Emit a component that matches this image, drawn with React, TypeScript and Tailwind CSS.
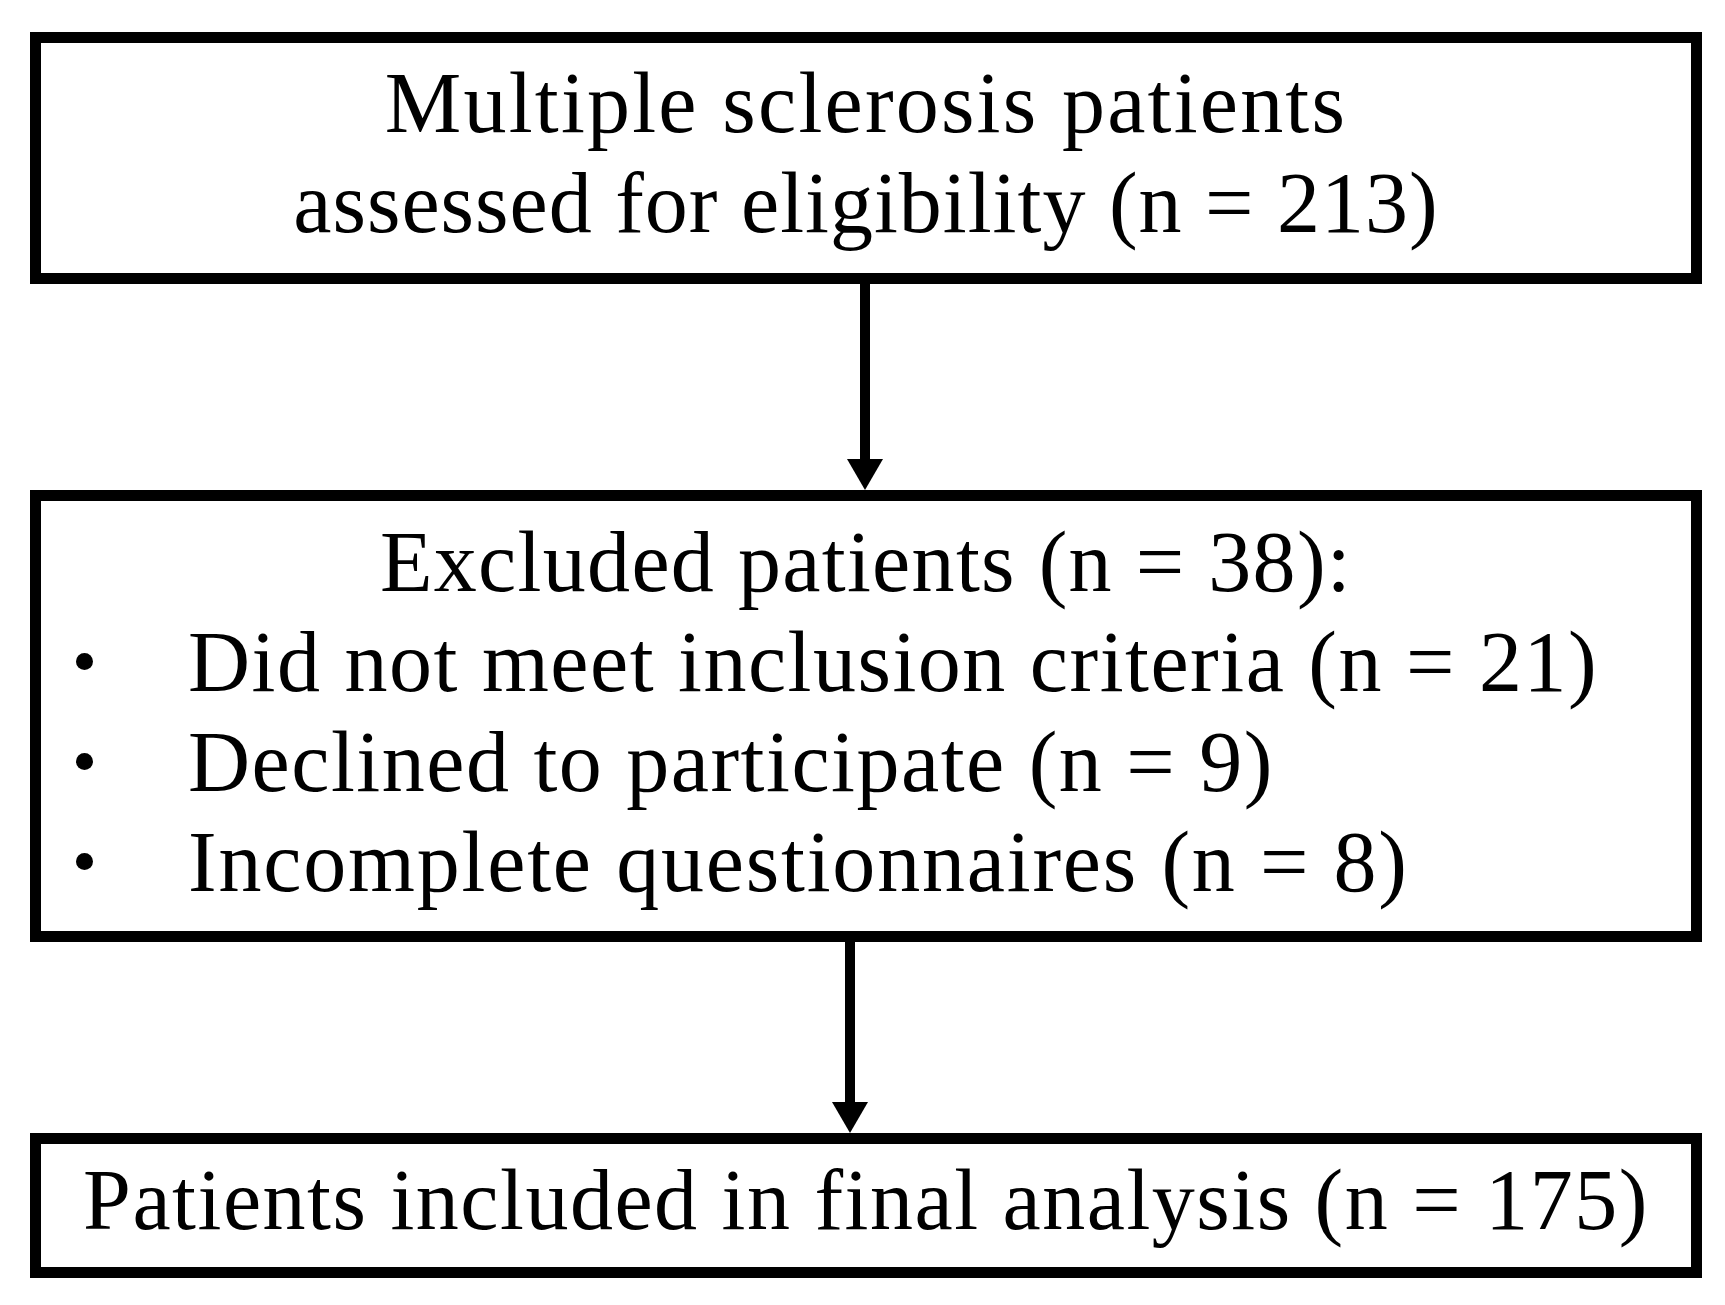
import React from "react";

function Arrow({ h, ml }: { h: number; ml: string }) {
  return (
    <div className="flex" style={{ height: h }}>
      <svg
        className={`${ml} block`}
        width="36"
        height={h}
        viewBox={`0 0 36 ${h}`}
      >
        <rect x="13" y="0" width="10" height={h - 30} fill="#000" />
        <polygon points={`0,${h - 31} 36,${h - 31} 18,${h}`} fill="#000" />
      </svg>
    </div>
  );
}

function Bullet({
  children,
  tracking,
}: {
  children: React.ReactNode;
  tracking: string;
}) {
  return (
    <div className="flex items-start">
      <div className="w-[147px] shrink-0 pl-[35px] pt-[41px]">
        <div className="w-[17px] h-[17px] rounded-full bg-black" />
      </div>
      <div className={tracking}>{children}</div>
    </div>
  );
}

export default function App() {
  return (
    <div
      className="w-[1725px] h-[1305px] bg-white text-black pl-[30px] pr-[23px] pt-[32px] text-[86px] leading-[100px] tracking-[1.5px]"
      style={{ fontFamily: '"Liberation Serif", "Times New Roman", serif' }}
    >
      <div className="h-[252px] border-[11px] border-black pt-[10px] text-center">
        <div className="tracking-[2.2px]">Multiple sclerosis patients</div>
        <div className="tracking-[1px]">assessed for eligibility (n = 213)</div>
      </div>
      <Arrow h={206} ml="ml-[817px]" />
      <div className="h-[452px] border-[11px] border-black pt-[11px]">
        <div className="text-center tracking-[1.3px]">Excluded patients (n = 38):</div>
        <Bullet tracking="tracking-[1.5px]">
          Did not meet inclusion criteria (n = 21)
        </Bullet>
        <Bullet tracking="tracking-[1.5px]">Declined to participate (n = 9)</Bullet>
        <Bullet tracking="tracking-[1.8px]">
          Incomplete questionnaires (n = 8)
        </Bullet>
      </div>
      <Arrow h={191} ml="ml-[802px]" />
      <div className="h-[145px] border-[11px] border-black pt-[6px] text-center">
        <div>Patients included in final analysis (n = 175)</div>
      </div>
    </div>
  );
}
